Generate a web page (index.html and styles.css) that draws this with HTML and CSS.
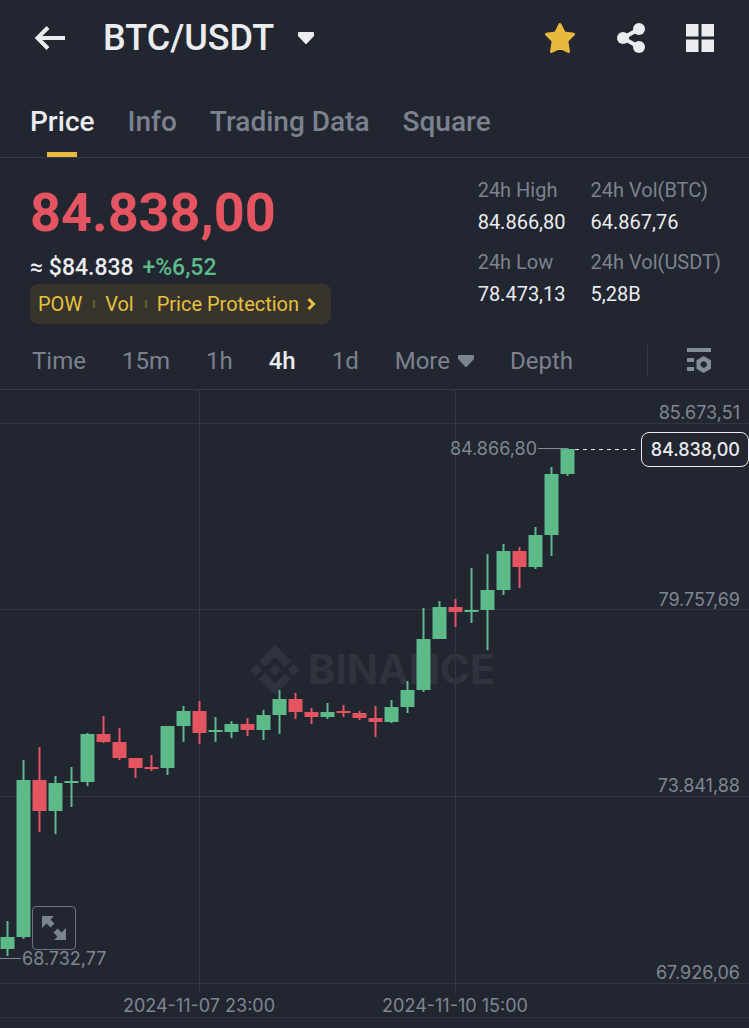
FILE: index.html
```html
<!DOCTYPE html>
<html lang="en">
<head>
  <meta charset="UTF-8">
  <meta name="viewport" content="width=device-width, initial-scale=1">
  <title>BTC/USDT</title>
  <link rel="stylesheet" href="styles.css">
</head>
<body>

  <header class="topbar">
    <button class="icon-btn" aria-label="Back">
      <svg width="32" height="26" viewBox="0 0 32 26"><path d="M14 2.500 3.500 13 14 23.500M3 13H31" fill="none" stroke="#eaecef" stroke-width="4"/></svg>
    </button>
    <button class="pair">
      BTC/USDT
      <svg width="16" height="12" viewBox="0 0 16 12"><path d="M1 0H15Q16 0 16 1V4L9 11.500Q8 12.500 7 11.500L0 4V1Q0 0 1 0Z" fill="#eaecef"/></svg>
    </button>
    <div class="actions">
      <button class="icon-btn" aria-label="Favorite">
        <svg width="32" height="32" viewBox="0 0 32 32"><path d="M16 2.500 20.200 11 29.500 12.300 22.800 19 24.500 29.500 16 25.300 7.500 29.500 9.200 19 2.500 12.300 11.800 11Z" fill="#e8b93e" stroke="#e8b93e" stroke-width="3" stroke-linejoin="round"/></svg>
      </button>
      <button class="icon-btn" aria-label="Share">
        <svg width="32" height="32" viewBox="0 0 32 32" fill="#eaecef"><path d="M24 7 8 16 24 25" fill="none" stroke="#eaecef" stroke-width="4"/><circle cx="8" cy="16" r="6"/><circle cx="24" cy="7" r="6"/><circle cx="24" cy="25" r="6"/></svg>
      </button>
      <button class="icon-btn" aria-label="Layout">
        <svg width="28" height="28" viewBox="0 0 28 28" fill="#eaecef"><path d="M0 0H12.500V12.500H0ZM15.500 0H28V12.500H15.500ZM0 15.500H12.500V28H0ZM15.500 15.500H28V28H15.500Z"/></svg>
      </button>
    </div>
  </header>

  <nav class="tabs">
    <a href="#price" class="active">Price</a>
    <a href="#info">Info</a>
    <a href="#data">Trading Data</a>
    <a href="#square">Square</a>
  </nav>

  <section class="summary" id="price">
    <div class="quote">
      <div class="last-price">84.838,00</div>
      <div class="fiat">≈ $84.838 <span class="change">+%6,52</span></div>
      <a class="tags" href="#tags">
        <span>POW</span>
        <span>Vol</span>
        <span>Price Protection</span>
        <svg width="9" height="12" viewBox="0 0 9 12"><path d="M1.500 1 6.500 6 1.500 11" fill="none" stroke="#e8c03a" stroke-width="3"/></svg>
      </a>
    </div>
    <dl class="stats">
      <div><dt>24h High</dt><dd>84.866,80</dd></div>
      <div><dt>24h Vol(BTC)</dt><dd>64.867,76</dd></div>
      <div><dt>24h Low</dt><dd>78.473,13</dd></div>
      <div><dt>24h Vol(USDT)</dt><dd>5,28B</dd></div>
    </dl>
  </section>

  <div class="intervals">
    <button>Time</button>
    <button>15m</button>
    <button>1h</button>
    <button class="active">4h</button>
    <button>1d</button>
    <button>More <svg width="16" height="12" viewBox="0 0 16 12"><path d="M1 0H15Q16 0 16 1V4L9 11.500Q8 12.500 7 11.500L0 4V1Q0 0 1 0Z" fill="#7b8290"/></svg></button>
    <button>Depth</button>
    <button class="settings" aria-label="Chart settings">
      <svg width="24" height="26" viewBox="0 0 24 26" fill="#848b99"><path d="M0 0H24V4H0ZM0 10H7V14H0ZM0 19H7V23H0Z"/><path fill-rule="evenodd" d="M16.500 8 24 12.200V20.800L16.500 25 9.500 20.800V12.200ZM16.700 13.300a3.200 3.200 0 1 0 .01 0Z"/></svg>
    </button>
  </div>

  <main class="chart">
    <svg class="plot" id="plot">
      <g class="grid">
        <line x1="0" x2="100%" y1="33" y2="33"/>
        <line x1="0" x2="100%" y1="219" y2="219"/>
        <line x1="0" x2="100%" y1="406" y2="406"/>
        <line x1="0" x2="100%" y1="593" y2="593"/>
        <line x1="199" x2="199" y1="0" y2="603"/>
        <line x1="455" x2="455" y1="0" y2="603"/>
      </g>
      <g class="watermark">
        <path d="M275 255 291 271 285 277 275 267 265 277 259 271ZM275 305 259 289 265 283 275 293 285 283 291 289ZM275 274 281 280 275 286 269 280ZM256 274 262 280 256 286 250 280ZM294 274 300 280 294 286 288 280Z"/>
        <text x="308" y="294">BINANCE</text>
      </g>
      <g id="candles"></g>
      <g class="marks">
        <line x1="538" x2="568" y1="58" y2="58"/>
        <line x1="0" x2="21" y1="568" y2="568"/>
        <line class="current" x1="575" x2="636" y1="59" y2="59"/>
      </g>
      <g class="labels">
        <text x="537" y="65" text-anchor="end">84.866,80</text>
        <text x="22" y="575">68.732,77</text>
        <text x="199" y="622" text-anchor="middle">2024-11-07 23:00</text>
        <text x="455" y="622" text-anchor="middle">2024-11-10 15:00</text>
      </g>
      <svg class="labels axis" x="100%">
        <text x="-9" y="29">85.673,51</text>
        <text x="-9" y="216">79.757,69</text>
        <text x="-9" y="402">73.841,88</text>
        <text x="-9" y="589">67.926,06</text>
      </svg>
    </svg>
    <div class="price-tag">84.838,00</div>
    <button class="expand" aria-label="Full screen">
      <svg width="26" height="26" viewBox="0 0 26 26" fill="#7b8290"><path d="M1 1H13L9.500 4.500 13.500 8.500 9.500 12.500 5.500 8.500 1 13ZM25 25H13L16.500 21.500 12.500 17.500 16.500 13.500 20.500 17.500 25 13Z"/></svg>
    </button>
  </main>

  <script>
    // high, body top, body bottom, low, direction
    const candles = [
      [531, 547, 559, 566, "up"],
      [370, 390, 547, 549, "up"],
      [357, 390, 421, 442, "down"],
      [386, 393, 421, 444, "up"],
      [377, 391, 393, 417, "up"],
      [343, 344, 392, 396, "up"],
      [326, 344, 352, 353, "down"],
      [338, 352, 368, 370, "down"],
      [368, 368, 378, 388, "down"],
      [365, 377, 379, 381, "down"],
      [336, 336, 378, 385, "up"],
      [316, 321, 336, 352, "up"],
      [311, 321, 343, 354, "down"],
      [327, 340, 342, 352, "up"],
      [331, 334, 342, 348, "up"],
      [328, 334, 340, 346, "down"],
      [320, 325, 340, 350, "up"],
      [300, 309, 325, 344, "up"],
      [303, 309, 322, 329, "down"],
      [318, 322, 327, 334, "down"],
      [313, 322, 327, 329, "up"],
      [315, 321, 323, 327, "down"],
      [321, 323, 328, 330, "down"],
      [316, 328, 332, 347, "down"],
      [310, 317, 332, 333, "up"],
      [291, 300, 317, 323, "up"],
      [218, 249, 300, 302, "up"],
      [211, 217, 249, 249, "up"],
      [209, 217, 222, 237, "down"],
      [178, 220, 222, 233, "up"],
      [164, 200, 220, 260, "up"],
      [154, 161, 200, 205, "up"],
      [157, 161, 177, 198, "down"],
      [137, 145, 177, 179, "up"],
      [77, 84, 145, 166, "up"],
      [58, 59, 84, 86, "up"]
    ];

    const step = 16;
    const group = document.getElementById("candles");

    function addRect(x, y, width, height, dir) {
      const rect = document.createElementNS("http://www.w3.org/2000/svg", "rect");
      rect.setAttribute("x", x);
      rect.setAttribute("y", y);
      rect.setAttribute("width", width);
      rect.setAttribute("height", height);
      rect.setAttribute("class", dir);
      group.appendChild(rect);
    }

    candles.forEach(([high, top, bottom, low, dir], i) => {
      addRect(i * step + 0.5, top, 14, bottom - top, dir);
      addRect(i * step + 6.5, high, 2, low - high, dir);
    });
  </script>

</body>
</html>
```
FILE: styles.css
```css
* {
  box-sizing: border-box;
}

body {
  margin: 0;
  background: #222630;
  color: #eaecef;
  font-family: Roboto, sans-serif;
}

button {
  padding: 0;
  border: none;
  background: none;
  color: inherit;
  font: inherit;
  cursor: pointer;
}

a {
  color: inherit;
  text-decoration: none;
}

svg {
  display: block;
}

.topbar {
  display: flex;
  align-items: center;
  height: 76px;
  padding: 0 35px 0 34px;
}

.pair {
  display: flex;
  align-items: center;
  gap: 24px;
  margin-left: 37px;
  font-size: 36px;
  font-weight: 500;
}

.actions {
  display: flex;
  align-items: center;
  gap: 39px;
  margin-left: auto;
}

.tabs {
  display: flex;
  gap: 33px;
  height: 82px;
  padding: 0 30px;
  border-bottom: 1px solid #363b46;
  color: #7b828e;
  font-size: 28px;
  font-weight: 500;
  line-height: 92px;
}

.tabs .active {
  position: relative;
  color: #eaecef;
}

.tabs .active::after {
  content: "";
  position: absolute;
  left: 50%;
  bottom: 0;
  width: 30px;
  height: 5px;
  margin-left: -15px;
  background: #e8b93e;
}

.summary {
  display: flex;
  justify-content: space-between;
  padding: 16px 28px 0 30px;
}

.last-price {
  color: #e45561;
  font-size: 54px;
  font-weight: 700;
  line-height: 78px;
}

.fiat {
  font-size: 23px;
  font-weight: 500;
  line-height: 32px;
}

.change {
  margin-left: 3px;
  color: #5dba89;
}

.tags {
  display: inline-flex;
  align-items: center;
  height: 40px;
  padding: 0 15px 0 8px;
  border-radius: 8px;
  background: #37342e;
  color: #e8c03a;
  font-size: 20px;
}

.tags span + span {
  display: flex;
  align-items: center;
}

.tags span + span::before {
  content: "";
  width: 2px;
  height: 8px;
  margin: 0 10px 0 11px;
  background: #655a34;
}

.tags svg {
  margin-left: 8px;
}

.stats {
  display: grid;
  grid-template-columns: auto auto;
  align-content: start;
  gap: 8px 25px;
  margin: 0;
  font-size: 20px;
  line-height: 32px;
}

.stats dt {
  color: #7b828e;
}

.stats dd {
  margin: 0;
}

.intervals {
  display: flex;
  align-items: center;
  gap: 36px;
  height: 66px;
  padding: 9px 38px 0 32px;
  border-bottom: 1px solid #363b46;
  color: #7b828e;
  font-size: 24px;
}

.intervals button {
  display: flex;
  align-items: center;
  gap: 8px;
}

.intervals .active {
  color: #eaecef;
  font-weight: 500;
}

.intervals .settings {
  height: 32px;
  margin-left: auto;
  padding-left: 39px;
  border-left: 1px solid #363b46;
}

.chart {
  position: relative;
  border-bottom: 1px solid #2f343f;
}

.plot {
  width: 100%;
  height: 627px;
}

.grid line {
  stroke: #313641;
  shape-rendering: crispEdges;
}

.watermark {
  fill: #2f333d;
  font-family: Inter, sans-serif;
  font-size: 41px;
  font-weight: 700;
}

.up {
  fill: #5dba89;
}

.down {
  fill: #e45561;
}

.marks line {
  stroke: #848b99;
  shape-rendering: crispEdges;
}

.marks .current {
  stroke: #eaecef;
  stroke-dasharray: 4 4;
}

.labels {
  fill: #7f8693;
  font-family: Inter, sans-serif;
  font-size: 18px;
}

.axis {
  overflow: visible;
  text-anchor: end;
}

.price-tag {
  position: absolute;
  top: 42px;
  right: 0;
  padding: 0 8px 0 9px;
  border: 1px solid #eaecef;
  border-radius: 8px;
  background: #222630;
  font-family: Inter, sans-serif;
  font-size: 18px;
  font-weight: 500;
  line-height: 33px;
}

.expand {
  position: absolute;
  left: 32px;
  bottom: 67px;
  display: grid;
  place-items: center;
  width: 44px;
  height: 44px;
  border: 1px solid #6b7280;
  border-radius: 4px;
  background: #222630;
}
```
